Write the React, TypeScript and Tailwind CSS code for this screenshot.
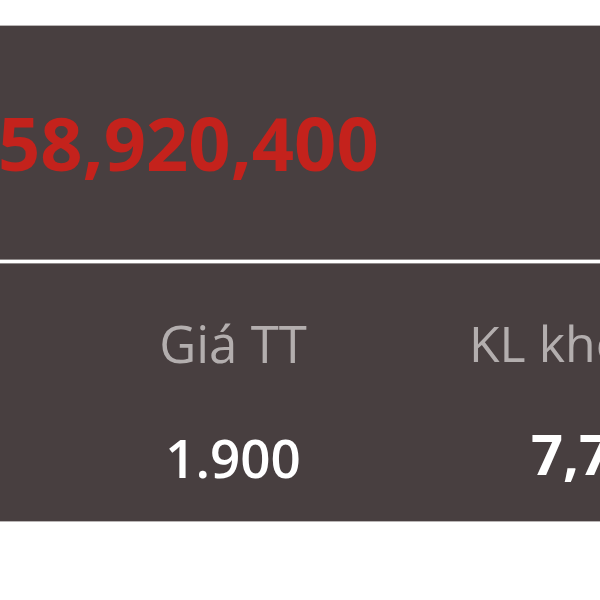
export default function App() {
    return (
        <div className="h-[600px] w-[600px] overflow-hidden bg-white pt-[25px] font-['Open_Sans',sans-serif]">
            <div className="border-t border-b border-[#b9b5b5] bg-[#483f40]">
                <section className="flex h-[233px] items-center">
                    <h2 className="-ml-[2px] whitespace-nowrap text-[74px] font-bold leading-none text-[#c4221c]">
                        58,920,400
                    </h2>
                </section>
                <div className="h-[5px] border-y border-[#8f8a8a] bg-white" />
                <section className="flex h-[257px] whitespace-nowrap pt-[54px]">
                    <div className="ml-[153px] flex w-[160px] shrink-0 flex-col items-center">
                        <span className="text-[51px] leading-none text-[#b3aeae]">
                            Giá TT
                        </span>
                        <span className="mt-[62px] text-[53px] font-semibold leading-none text-white">
                            1.900
                        </span>
                    </div>
                    <div className="ml-[156px] flex shrink-0 flex-col items-start">
                        <span className="text-[50px] leading-none text-[#b3aeae]">
                            KL khớp
                        </span>
                        <span className="ml-[62px] mt-[57px] text-[56px] font-bold leading-none text-white">
                            7,744,000
                        </span>
                    </div>
                </section>
            </div>
        </div>
    );
}
